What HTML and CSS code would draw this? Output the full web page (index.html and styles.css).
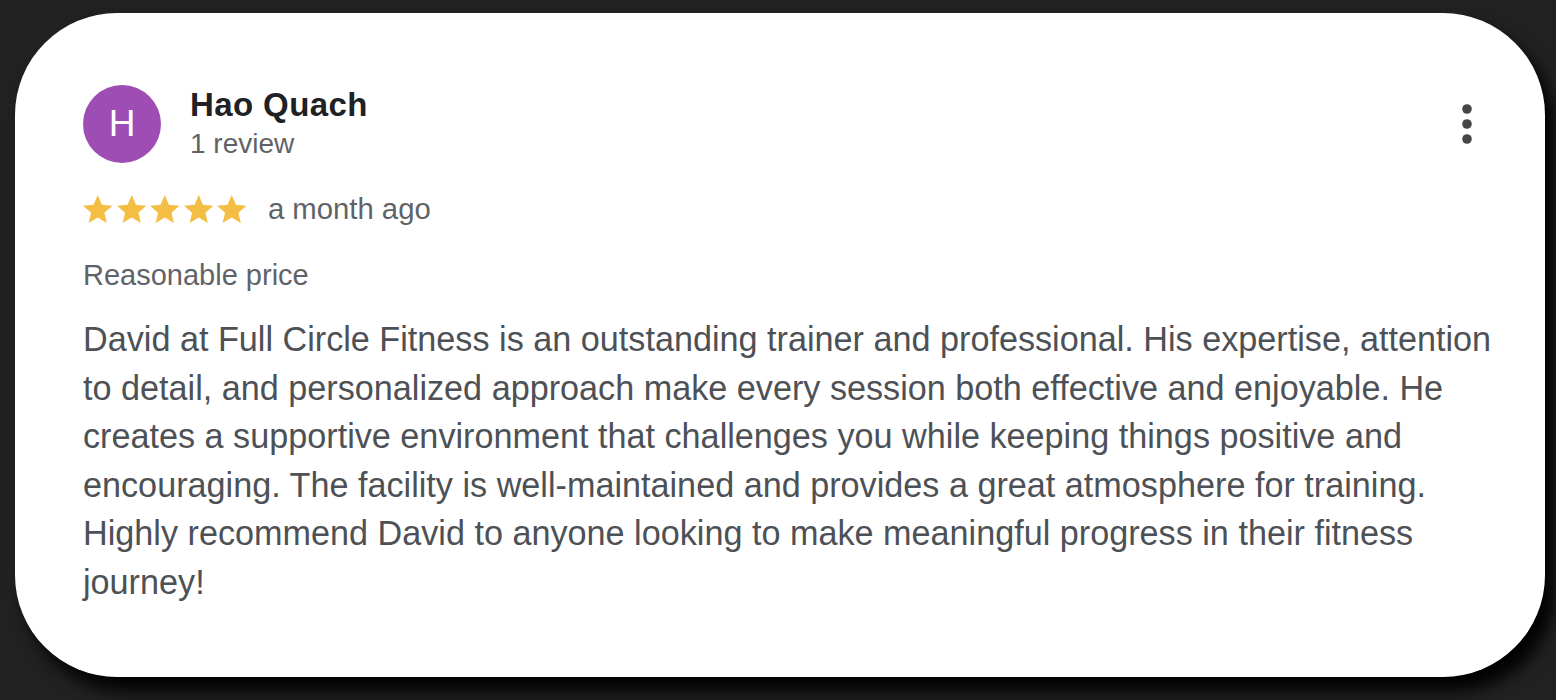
FILE: index.html
```html
<!DOCTYPE html>
<html lang="en">
<head>
<meta charset="utf-8">
<title>Review</title>
<link rel="stylesheet" href="styles.css">
</head>
<body>
<div class="stage">
  <article class="card">
    <header class="head">
      <div class="avatar">H</div>
      <div class="who">
        <div class="name">Hao Quach</div>
        <div class="count">1 review</div>
      </div>
      <button class="menu" aria-label="More">
        <svg width="10" height="40" viewBox="0 0 10 40"><circle cx="5" cy="5" r="4.8"/><circle cx="5" cy="20" r="4.8"/><circle cx="5" cy="35" r="4.8"/></svg>
      </button>
    </header>
    <div class="rating">
      <div class="stars">
        <svg class="star" viewBox="2 2 20 19"><path d="M12 17.27L18.18 21l-1.64-7.03L22 9.24l-7.19-.61L12 2 9.19 8.63 2 9.24l5.46 4.73L5.82 21z"/></svg>
        <svg class="star" viewBox="2 2 20 19"><path d="M12 17.27L18.18 21l-1.64-7.03L22 9.24l-7.19-.61L12 2 9.19 8.63 2 9.24l5.46 4.73L5.82 21z"/></svg>
        <svg class="star" viewBox="2 2 20 19"><path d="M12 17.27L18.18 21l-1.64-7.03L22 9.24l-7.19-.61L12 2 9.19 8.63 2 9.24l5.46 4.73L5.82 21z"/></svg>
        <svg class="star" viewBox="2 2 20 19"><path d="M12 17.27L18.18 21l-1.64-7.03L22 9.24l-7.19-.61L12 2 9.19 8.63 2 9.24l5.46 4.73L5.82 21z"/></svg>
        <svg class="star" viewBox="2 2 20 19"><path d="M12 17.27L18.18 21l-1.64-7.03L22 9.24l-7.19-.61L12 2 9.19 8.63 2 9.24l5.46 4.73L5.82 21z"/></svg>
      </div>
      <span class="date">a month ago</span>
    </div>
    <div class="reason">Reasonable price</div>
    <p class="text">David at Full Circle Fitness is an outstanding trainer and professional. His expertise, attention to detail, and personalized approach make every session both effective and enjoyable. He creates a supportive environment that challenges you while keeping things positive and encouraging. The facility is well-maintained and provides a great atmosphere for training. Highly recommend David to anyone looking to make meaningful progress in their fitness journey!</p>
  </article>
</div>
</body>
</html>
```

FILE: styles.css
```css
html, body {
  margin: 0;
  padding: 0;
  background: #212121;
  height: 100%;
  overflow: hidden;
}

.stage {
  padding: 13px 0 0 15px;
}

.card {
  box-sizing: border-box;
  width: 1530px;
  height: 664px;
  background: #ffffff;
  border-radius: 102px;
  box-shadow: 10px 14px 16px rgba(0, 0, 0, 0.95);
  padding: 72px 40px 0 68px;
  font-family: "Liberation Sans", Arial, Helvetica, sans-serif;
}

.head {
  display: flex;
  align-items: flex-start;
}

.avatar {
  width: 78px;
  height: 78px;
  border-radius: 50%;
  background: #9e4db5;
  color: #ffffff;
  font-size: 37px;
  line-height: 78px;
  text-align: center;
  flex: none;
}

.who {
  margin-left: 29px;
  margin-top: 1px;
}

.name {
  font-size: 33px;
  font-weight: 700;
  line-height: 38px;
  letter-spacing: 0.4px;
  color: #202124;
}

.count {
  font-size: 28px;
  line-height: 34px;
  color: #5f6368;
  margin-top: 3px;
}

.menu {
  margin-left: auto;
  margin-right: 33px;
  margin-top: 19px;
  padding: 0;
  border: 0;
  background: none;
  display: block;
  line-height: 0;
}

.menu svg {
  display: block;
  fill: #444746;
}

.rating {
  display: flex;
  align-items: center;
  height: 34px;
  margin-top: 29px;
}

.stars {
  display: flex;
  gap: 4.1px;
}

.star {
  display: block;
  width: 29.5px;
  height: 28px;
  fill: #f3be43;
}

.date {
  margin-left: 21px;
  font-size: 29.3px;
  line-height: 34px;
  color: #5f6368;
}

.reason {
  margin-top: 32px;
  font-size: 29px;
  line-height: 34px;
  color: #5f6368;
}

.text {
  margin: 23px 0 0 0;
  font-size: 34.2px;
  line-height: 48.5px;
  color: #4d5156;
}
```
